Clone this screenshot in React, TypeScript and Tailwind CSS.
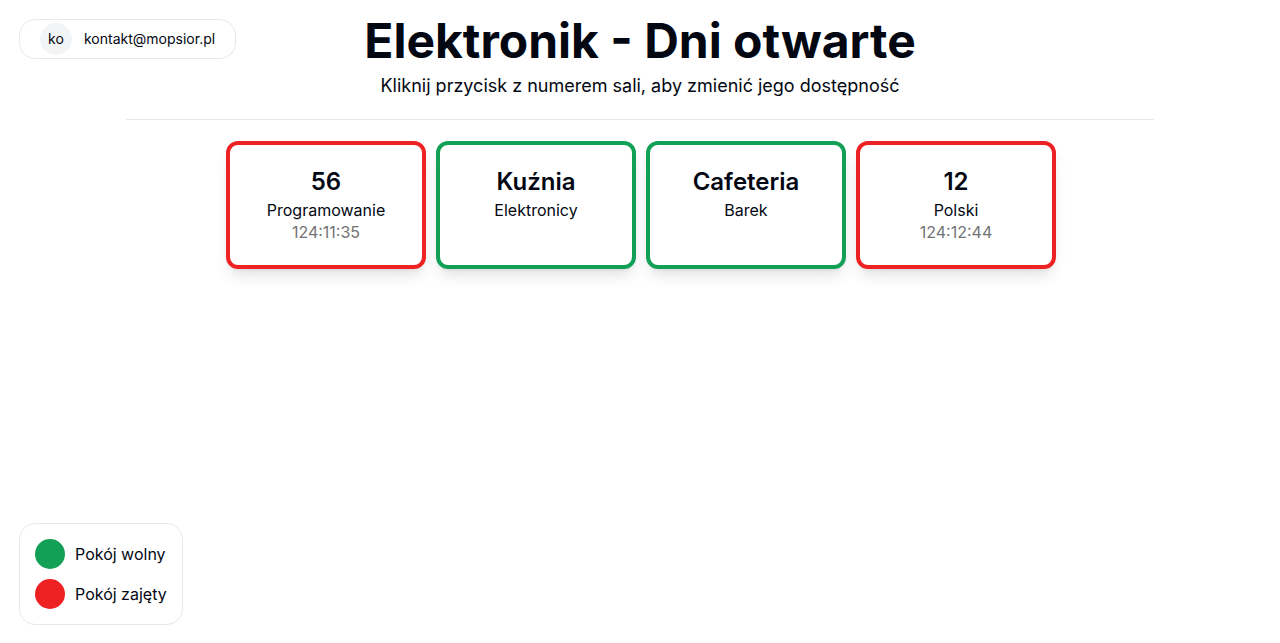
import React from "react";

type Room = { id: number; name: string; label: string; busy: boolean; time?: string };

const rooms: Room[] = [
  { id: 1, name: "56", label: "Programowanie", busy: true, time: "124:11:35" },
  { id: 2, name: "Kuźnia", label: "Elektronicy", busy: false },
  { id: 3, name: "Cafeteria", label: "Barek", busy: false },
  { id: 4, name: "12", label: "Polski", busy: true, time: "124:12:44" },
];

const App = () => {
  return (
    <div className="min-h-screen bg-white text-[#030712] font-['Inter',sans-serif]">
      <div className="fixed left-[19px] top-[19px] flex items-center gap-3 rounded-2xl border border-gray-200 bg-white py-[3px] pl-5 pr-5">
        <span className="flex h-8 w-8 items-center justify-center rounded-full bg-gray-100 text-sm">ko</span>
        <span className="text-sm">kontakt@mopsior.pl</span>
      </div>

      <div className="flex flex-col items-center pt-[17px]">
        <h1 className="text-5xl font-bold">Elektronik - Dni otwarte</h1>
        <p className="mt-[7px] text-lg">Kliknij przycisk z numerem sali, aby zmienić jego dostępność</p>
        <hr className="mt-[19px] w-[1028px] border-gray-200" />
        <ul className="mt-[21px] flex gap-2.5 pl-0.5">
          {rooms.map((room) => (
            <li
              key={room.id}
              className={
                "flex h-32 w-[200px] cursor-pointer flex-col items-center rounded-xl border-4 bg-white pt-[21px] shadow-lg " +
                (room.busy ? "border-[#ee2222]" : "border-[#11a055]")
              }
            >
              <span className="text-2xl font-semibold">{room.name}</span>
              <span className="text-base">{room.label}</span>
              {room.time && <span className="-mt-0.5 text-base text-neutral-500">{room.time}</span>}
            </li>
          ))}
        </ul>
      </div>

      <div className="fixed bottom-[18px] left-[19px] flex flex-col gap-2.5 rounded-2xl border border-gray-200 bg-white p-[15px]">
        <div className="flex items-center gap-2.5">
          <span className="h-[30px] w-[30px] rounded-full bg-[#11a055]" />
          <span>Pokój wolny</span>
        </div>
        <div className="flex items-center gap-2.5">
          <span className="h-[30px] w-[30px] rounded-full bg-[#ee2222]" />
          <span>Pokój zajęty</span>
        </div>
      </div>
    </div>
  );
};

export default App;
